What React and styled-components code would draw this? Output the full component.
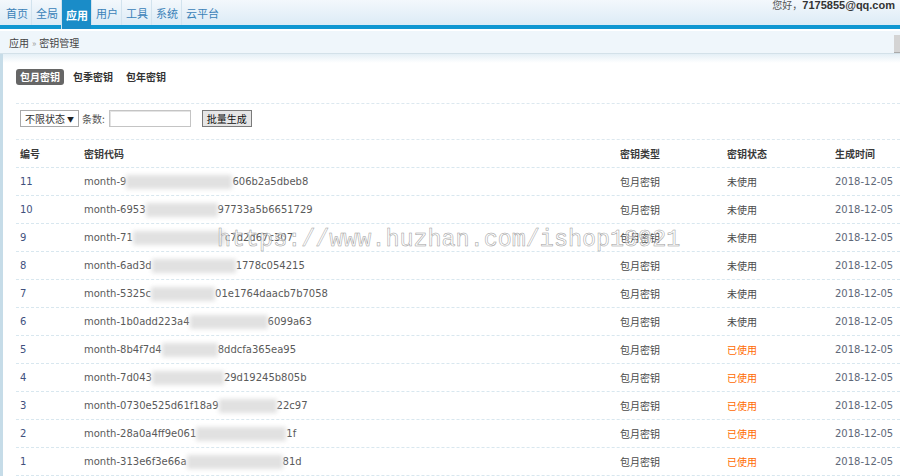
import React from 'react';
import styled, { createGlobalStyle } from 'styled-components';

const GlobalStyle = createGlobalStyle`
    html, body {
        margin: 0;
        padding: 0;
        background: #FFFFFF;
    }

    body {
        font-family: "DejaVu Sans", "Noto Sans CJK SC", sans-serif;
        font-size: 10px;
        color: #333333;
    }
`;

const rows = [
    { id: 11, pre: 'month-9', blur: 106, post: '606b2a5dbeb8', used: false },
    { id: 10, pre: 'month-6953', blur: 72, post: '97733a5b6651729', used: false },
    { id: 9, pre: 'month-71', blur: 92, post: 'c7d2d67c307', used: false },
    { id: 8, pre: 'month-6ad3d', blur: 84, post: '1778c054215', used: false },
    { id: 7, pre: 'month-5325c', blur: 64, post: '01e1764daacb7b7058', used: false },
    { id: 6, pre: 'month-1b0add223a4', blur: 78, post: '6099a63', used: false },
    { id: 5, pre: 'month-8b4f7d4', blur: 56, post: '8ddcfa365ea95', used: true },
    { id: 4, pre: 'month-7d043', blur: 72, post: '29d19245b805b', used: true },
    { id: 3, pre: 'month-0730e525d61f18a9', blur: 58, post: '22c97', used: true },
    { id: 2, pre: 'month-28a0a4ff9e061', blur: 90, post: '1f', used: true },
    { id: 1, pre: 'month-313e6f3e66a', blur: 96, post: '81d', used: true },
];

const navItems = ['首页', '全局', '应用', '用户', '工具', '系统', '云平台'];

const Page = styled.div`
    position: relative;
    width: 900px;
    height: 476px;
    overflow: hidden;
`;

const TopBar = styled.div`
    display: flex;
    justify-content: space-between;
    height: 25px;
    background: linear-gradient(180deg, #F3F8FC 0%, #DCEBF6 100%);
    border-bottom: 4px solid #0F97D2;
`;

const Nav = styled.ul`
    display: flex;
    margin: 0;
    padding: 0 0 0 1px;
    list-style: none;
`;

const NavItem = styled.li`
    display: flex;
    align-items: center;
    height: ${({ $active }) => $active ? '29px' : '25px'};
    padding: 0 3px 0 4px;
    font-family: "Noto Sans CJK SC", sans-serif;
    font-size: 11px;
    font-weight: ${({ $active }) => $active ? 700 : 400};
    color: ${({ $active }) => $active ? '#FFFFFF' : '#3A82B8'};
    background: ${({ $active }) => $active ? '#1A8CC8' : 'transparent'};
    border-left: 1px solid ${({ $first }) => $first ? 'transparent' : '#D2E3EE'};
`;

const Greeting = styled.div`
    padding: 0 5px 0 0;
    line-height: 11px;
    font-size: 10px;
    color: #555555;

    b {
        font-family: "Liberation Sans", "Noto Sans CJK SC", sans-serif;
        font-size: 11px;
        color: #333333;
    }
`;

const Crumbs = styled.div`
    display: flex;
    align-items: center;
    justify-content: space-between;
    margin-top: 2px;
    height: 22px;
    padding-left: 9px;
    background: #EFF6FB;
    border-bottom: 1px solid #D3E1E9;
    font-family: "Noto Sans CJK SC", sans-serif;
    font-size: 10px;
    color: #444444;

    span {
        margin: 0 3px;
        color: #A0A0A0;
        font-size: 9px;
    }
`;

const CrumbButton = styled.i`
    width: 6px;
    height: 17px;
    margin-top: 3px;
    background: #D4D4D4;
    border-bottom: 1px solid #AAAAAA;
`;

const Main = styled.div`
    padding: 15px 0 0 13px;
    border-left: 3px solid #C6DCE8;
    background: linear-gradient(180deg, #E4EFF6 0px, #FFFFFF 9px);
    height: 422px;
`;

const Tabs = styled.div`
    display: flex;
    gap: 5px;
    padding-bottom: 18px;
    border-bottom: 1px dashed #DCE8EF;
`;

const Tab = styled.a`
    height: 16px;
    line-height: 16px;
    padding: 0 4px;
    border-radius: 3px;
    font-family: "Noto Sans CJK SC", sans-serif;
    font-size: 10px;
    font-weight: 700;
    color: ${({ $active }) => $active ? '#FFFFFF' : '#333333'};
    background: ${({ $active }) => $active ? '#666666' : 'transparent'};
`;

const Filter = styled.div`
    display: flex;
    align-items: center;
    padding: 6px 0 12px 4px;
    border-bottom: 1px dashed #DCE8EF;
    font-family: "Noto Sans CJK SC", sans-serif;
    font-size: 10px;
    color: #555555;
`;

const SelectBox = styled.div`
    display: flex;
    align-items: center;
    justify-content: space-between;
    box-sizing: border-box;
    width: 59px;
    height: 17px;
    padding: 0 4px 0 4px;
    border: 1px solid #A9A9A9;
    background: #FFFFFF;
    color: #333333;

    i {
        font-style: normal;
        font-size: 7px;
        color: #222222;
    }
`;

const Label = styled.span`
    margin: 0 4px 0 3px;
`;

const Input = styled.input`
    box-sizing: border-box;
    width: 82px;
    height: 17px;
    margin: 0;
    border: 1px solid #C4C4C4;
    box-shadow: inset 1px 1px 0 #E4E4E4;
`;

const Button = styled.button`
    box-sizing: border-box;
    height: 17px;
    margin-left: 11px;
    padding: 0 4px;
    border: 1px solid #7A7A7A;
    background: #E6E6E6;
    font-family: "Noto Sans CJK SC", sans-serif;
    font-size: 10px;
    color: #111111;
    line-height: 14px;
`;

const Row = styled.div`
    display: grid;
    grid-template-columns: 64px 536px 107px 108px 1fr;
    align-items: center;
    height: 27px;
    border-bottom: 1px dashed #D8E7EF;
`;

const HeadCell = styled.div`
    padding-left: 4px;
    font-family: "Noto Sans CJK SC", sans-serif;
    font-size: 10px;
    font-weight: 700;
    color: #3A3A3A;
`;

const Cell = styled.div`
    display: flex;
    align-items: center;
    padding-left: 4px;
    white-space: nowrap;
    font-size: 10px;
    color: ${({ $tone }) => ({
        id: '#3F517E',
        code: '#5A5A5A',
        date: '#5E6878',
        used: '#FF6A00',
    }[$tone] || '#4A4A4A')};
    font-family: ${({ $cjk }) => $cjk ? '"Noto Sans CJK SC", sans-serif' : '"DejaVu Sans", sans-serif'};
`;

const Blur = styled.span`
    display: inline-block;
    width: ${({ $w }) => $w}px;
    height: 14px;
    background: #E1E1E1;
    filter: blur(2px);
`;

const Watermark = styled.div`
    position: absolute;
    left: 217px;
    top: 227px;
    font-family: "Liberation Mono", monospace;
    font-size: 23.4px;
    line-height: 26px;
    color: rgba(255, 255, 255, 0.55);
    -webkit-text-stroke: 0.5px #9A9A9A;
    pointer-events: none;
`;

const App = () => (
    <Page>
        <GlobalStyle />
        <TopBar>
            <Nav>
                {navItems.map((item, i) => (
                    <NavItem key={item} $first={i === 0} $active={item === '应用'}>
                        {item}
                    </NavItem>
                ))}
            </Nav>
            <Greeting>
                您好，<b>7175855@qq.com</b>
            </Greeting>
        </TopBar>
        <Crumbs>
            <div>
                应用<span>»</span>密钥管理
            </div>
            <CrumbButton />
        </Crumbs>
        <Main>
            <Tabs>
                <Tab $active>包月密钥</Tab>
                <Tab>包季密钥</Tab>
                <Tab>包年密钥</Tab>
            </Tabs>
            <Filter>
                <SelectBox>
                    不限状态<i>▼</i>
                </SelectBox>
                <Label>条数:</Label>
                <Input />
                <Button>批量生成</Button>
            </Filter>
            <Row>
                <HeadCell>编号</HeadCell>
                <HeadCell>密钥代码</HeadCell>
                <HeadCell>密钥类型</HeadCell>
                <HeadCell>密钥状态</HeadCell>
                <HeadCell>生成时间</HeadCell>
            </Row>
            {rows.map((row) => (
                <Row key={row.id}>
                    <Cell $tone="id">{row.id}</Cell>
                    <Cell $tone="code">
                        {row.pre}
                        <Blur $w={row.blur} />
                        {row.post}
                    </Cell>
                    <Cell $cjk>包月密钥</Cell>
                    <Cell $cjk $tone={row.used ? 'used' : ''}>{row.used ? '已使用' : '未使用'}</Cell>
                    <Cell $tone="date">2018-12-05</Cell>
                </Row>
            ))}
        </Main>
        <Watermark>https://www.huzhan.com/ishop18921</Watermark>
    </Page>
);

export default App;
